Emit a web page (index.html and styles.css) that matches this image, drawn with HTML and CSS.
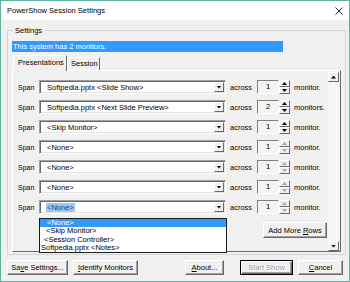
FILE: index.html
```html
<!doctype html>
<html lang="en">
  <head>
    <meta charset="utf-8">
    <title>PowerShow Session Settings</title>
    <link rel="stylesheet" href="styles.css">
  </head>
  <body>
    <div class="window">
      <div class="titlebar">
        <span class="title">PowerShow Session Settings</span>
        <svg class="close" width="8" height="8" viewBox="0 0 8 8"><path d="M0.5 0.5L7.5 7.5M7.5 0.5L0.5 7.5" stroke="#111" stroke-width="0.9" fill="none"/></svg>
      </div>

      <div class="client">
        <fieldset class="group">
          <legend>Settings</legend>
          <div class="info">This system has 2 monitors.</div>

          <div class="tabs">
            <div class="tab active">Presentations</div>
            <div class="tab">Session</div>
          </div>

          <div class="panel">
            <div class="rows">
              <div class="row">
                <span class="lbl">Span</span>
                <div class="combo"><span class="combo-text">Softpedia.pptx &lt;Slide Show&gt;</span><span class="drop"></span></div>
                <span class="across">across</span>
                <div class="spin"><span class="spin-val">1</span><span class="spin-btns"><span class="up"></span><span class="down"></span></span></div>
                <span class="unit">monitor.</span>
              </div>
              <div class="row">
                <span class="lbl">Span</span>
                <div class="combo"><span class="combo-text">Softpedia.pptx &lt;Next Slide Preview&gt;</span><span class="drop"></span></div>
                <span class="across">across</span>
                <div class="spin"><span class="spin-val">2</span><span class="spin-btns"><span class="up"></span><span class="down"></span></span></div>
                <span class="unit">monitors.</span>
              </div>
              <div class="row">
                <span class="lbl">Span</span>
                <div class="combo"><span class="combo-text">&lt;Skip Monitor&gt;</span><span class="drop"></span></div>
                <span class="across">across</span>
                <div class="spin"><span class="spin-val">1</span><span class="spin-btns"><span class="up"></span><span class="down"></span></span></div>
                <span class="unit">monitor.</span>
              </div>
              <div class="row">
                <span class="lbl">Span</span>
                <div class="combo"><span class="combo-text">&lt;None&gt;</span><span class="drop"></span></div>
                <span class="across">across</span>
                <div class="spin off"><span class="spin-val">1</span><span class="spin-btns"><span class="up"></span><span class="down"></span></span></div>
                <span class="unit">monitor.</span>
              </div>
              <div class="row">
                <span class="lbl">Span</span>
                <div class="combo"><span class="combo-text">&lt;None&gt;</span><span class="drop"></span></div>
                <span class="across">across</span>
                <div class="spin off"><span class="spin-val">1</span><span class="spin-btns"><span class="up"></span><span class="down"></span></span></div>
                <span class="unit">monitor.</span>
              </div>
              <div class="row">
                <span class="lbl">Span</span>
                <div class="combo"><span class="combo-text">&lt;None&gt;</span><span class="drop"></span></div>
                <span class="across">across</span>
                <div class="spin off"><span class="spin-val">1</span><span class="spin-btns"><span class="up"></span><span class="down"></span></span></div>
                <span class="unit">monitor.</span>
              </div>
              <div class="row">
                <span class="lbl">Span</span>
                <div class="combo"><span class="combo-text"><span class="sel">&lt;None&gt;</span></span><span class="drop"></span></div>
                <span class="across">across</span>
                <div class="spin off"><span class="spin-val">1</span><span class="spin-btns"><span class="up"></span><span class="down"></span></span></div>
                <span class="unit">monitor.</span>
              </div>

              <div class="add-row">
                <button class="btn add">Add More <u>R</u>ows</button>
              </div>
            </div>

            <div class="scrollbar">
              <span class="sb-btn sb-up"></span>
              <span class="sb-track"></span>
              <span class="sb-btn sb-down"></span>
            </div>

            <!-- open list of the last combo -->
            <ul class="dropdown">
              <li class="hot">&lt;None&gt;</li>
              <li class="in2">&lt;Skip Monitor&gt;</li>
              <li class="in1">&lt;Session Controller&gt;</li>
              <li class="in0">Softpedia.pptx &lt;Notes&gt;</li>
            </ul>
          </div>
        </fieldset>

        <div class="buttons">
          <button class="btn save">Sa<u>v</u>e Settings...</button>
          <button class="btn identify"><u>I</u>dentify Monitors</button>
          <span class="spacer"></span>
          <button class="btn about"><u>A</u>bout...</button>
          <button class="btn start" disabled>Start Show</button>
          <button class="btn cancel"><u>C</u>ancel</button>
        </div>
      </div>
    </div>
  </body>
</html>
```

FILE: styles.css
```css
/* Reset */
* {
  margin: 0;
  padding: 0;
  box-sizing: border-box;
}

body {
  width: 350px;
  height: 282px;
  overflow: hidden;
  font-family: "Liberation Sans", Arial, sans-serif;
  font-size: 7.5px;
  color: #000;
}

/* Window frame */
.window {
  width: 350px;
  height: 282px;
  border: 1px solid #5fb1a0;
  background-color: #f0f0f0;
  display: flex;
  flex-direction: column;
}

.titlebar {
  height: 19px;
  flex: none;
  background-color: #fff;
  display: flex;
  align-items: center;
  justify-content: space-between;
  padding: 0 6px;
  font-size: 7.5px;
}

.client {
  flex: 1;
  display: flex;
  flex-direction: column;
}

/* Settings group */
.group {
  margin: 6px 6px 0 6px;
  padding: 6px 4px 2px 4px;
  border: 1px solid #d5d5d5;
}

.group legend {
  margin-left: 1px;
  padding: 0 2px;
  line-height: 9px;
}

.info {
  width: 271px;
  height: 11px;
  line-height: 11px;
  padding-left: 1px;
  background-color: #3399ff;
  color: #fff;
}

/* Tabs */
.tabs {
  margin-top: 3px;
  height: 15px;
  display: flex;
  align-items: flex-end;
}

.tab {
  height: 13px;
  line-height: 12px;
  padding-left: 3px;
  border: 1px solid;
  border-color: #fff #696969 transparent #fff;
  border-bottom: none;
}

.tab.active {
  width: 54px;
  height: 16px;
  margin-left: 1px;
  margin-bottom: -1px;
  padding-left: 4px;
  line-height: 14px;
  background-color: #f0f0f0;
  position: relative;
  z-index: 1;
}

.tab:not(.active) {
  width: 33px;
}

/* Tab page */
.panel {
  position: relative;
  width: 329px;
  height: 182px;
  border: 1px solid;
  border-color: #fff #696969 #696969 #fff;
  display: flex;
}

.rows {
  flex: 1;
  padding: 6px 0 0 5px;
}

.row {
  height: 20px;
  display: flex;
  align-items: center;
}

.lbl {
  width: 21px;
  font-size: 7px;
}

.combo {
  width: 187px;
  height: 14px;
  background-color: #fff;
  border: 1px solid;
  border-color: #a0a0a0 #fff #fff #a0a0a0;
  box-shadow: inset 1px 1px 0 #696969, inset -1px -1px 0 #e3e3e3;
  display: flex;
  align-items: center;
}

.combo-text {
  flex: 1;
  padding-left: 7px;
  white-space: nowrap;
}

.sel {
  background-color: #9cc8f2;
  color: #1b3f86;
  padding: 0 1px;
  margin-left: -1px;
}

.drop {
  width: 10px;
  height: 10px;
  margin-right: 1px;
  background-color: #f0f0f0;
  border: 1px solid;
  border-color: #fff #696969 #696969 #fff;
  display: flex;
  align-items: center;
  justify-content: center;
}

.drop::before,
.down::before,
.sb-down::before {
  content: "";
  width: 5px;
  height: 3px;
  background-color: #000;
  clip-path: polygon(0 0, 100% 0, 50% 100%);
}

.up::before,
.sb-up::before {
  content: "";
  width: 5px;
  height: 3px;
  background-color: #000;
  clip-path: polygon(50% 0, 100% 100%, 0 100%);
}

.across {
  margin-left: 4px;
  width: 22px;
}

/* Spin boxes */
.spin {
  margin-left: 5px;
  width: 33px;
  height: 14px;
  display: flex;
}

.spin-val {
  width: 22px;
  height: 14px;
  line-height: 12px;
  text-align: center;
  background-color: #f4f4f4;
  border: 1px solid;
  border-color: #808080 #fff #fff #808080;
}

.spin-btns {
  width: 11px;
  display: flex;
  flex-direction: column;
}

.spin-btns span {
  flex: 1;
  background-color: #f0f0f0;
  border: 1px solid;
  border-color: #fff #696969 #696969 #fff;
  display: flex;
  align-items: center;
  justify-content: center;
}

.spin.off .spin-btns span::before {
  background-color: #a8a8a8;
}

.unit {
  margin-left: 4px;
}

.add-row {
  margin-top: 5px;
  padding-right: 1px;
  display: flex;
  justify-content: flex-end;
}

/* Buttons */
.btn {
  height: 15px;
  font-family: inherit;
  font-size: 7.5px;
  color: #000;
  background-color: #f0f0f0;
  border: 1px solid;
  border-color: #fff #696969 #696969 #fff;
  box-shadow: inset -1px -1px 0 #a0a0a0;
}

.btn.add {
  width: 64px;
  height: 16px;
}

.btn.start {
  border-color: #000;
  box-shadow: inset 1px 1px 0 #fff, inset -1px -1px 0 #696969, inset -2px -2px 0 #a0a0a0;
  color: #a0a0a0;
  text-shadow: 1px 1px 0 #fff;
}

/* Scrollbar */
.scrollbar {
  width: 11px;
  margin: 1px 1px 0 0;
  display: flex;
  flex-direction: column;
  background-color: #f7f7f7;
}

.sb-btn {
  height: 10px;
  background-color: #f0f0f0;
  border: 1px solid;
  border-color: #fff #696969 #696969 #fff;
  display: flex;
  align-items: center;
  justify-content: center;
}

.sb-track {
  flex: 1;
}

/* Open combo list */
.dropdown {
  position: absolute;
  left: 26px;
  top: 147px;
  width: 188px;
  height: 35px;
  list-style: none;
  background-color: #fff;
  border: 1px solid #1a1a1a;
  z-index: 5;
}

.dropdown li {
  height: 8.25px;
  line-height: 8.25px;
  white-space: nowrap;
}

.dropdown .hot {
  background-color: #3399ff;
  color: #fff;
  padding-left: 7px;
}

.dropdown .in2 {
  padding-left: 6px;
}

.dropdown .in1 {
  padding-left: 4px;
}

.dropdown .in0 {
  padding-left: 1px;
}

/* Bottom button bar */
.buttons {
  margin-top: 5px;
  padding: 0 6px;
  display: flex;
}

.save { width: 61px; }
.identify { width: 65px; margin-left: 5px; }
.spacer { flex: 1; }
.about { width: 39px; }
.start { width: 53px; margin-left: 16px; }
.cancel { width: 45px; margin-left: 5px; }
```
